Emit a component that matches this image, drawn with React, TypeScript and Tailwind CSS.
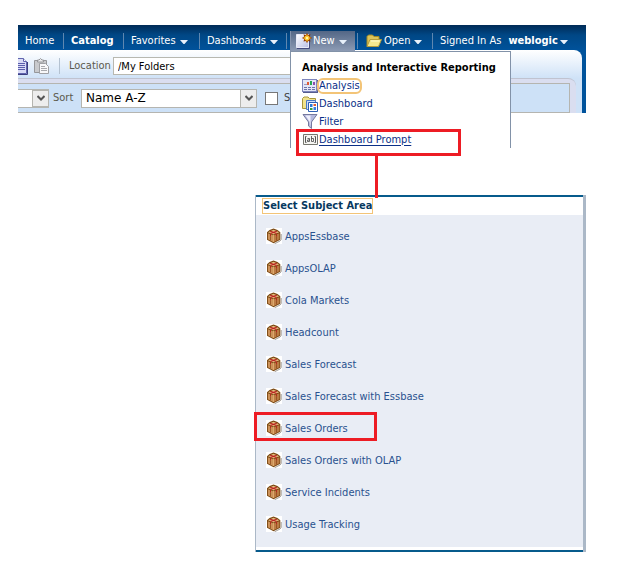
import type { ReactNode } from "react";

const subjectAreas = [
  "AppsEssbase",
  "AppsOLAP",
  "Cola Markets",
  "Headcount",
  "Sales Forecast",
  "Sales Forecast with Essbase",
  "Sales Orders",
  "Sales Orders with OLAP",
  "Service Incidents",
  "Usage Tracking",
];

function Caret() {
  return (
    <svg width="8" height="9" viewBox="0 0 8 9" className="shrink-0" aria-hidden="true">
      <path d="M0 4h8L4.500 8h-1z" fill="#e8f0fa" />
    </svg>
  );
}

function Separator() {
  return <span className="h-4 w-px shrink-0 bg-[#5e87b0]" />;
}

function NewIcon() {
  return (
    <svg width="16" height="16" viewBox="0 0 16 16" className="shrink-0" aria-hidden="true">
      <defs>
        <linearGradient id="page" x1="0" y1="0" x2="1" y2="1">
          <stop offset="0" stopColor="#fff" />
          <stop offset="1" stopColor="#b9bfe6" />
        </linearGradient>
      </defs>
      <path d="M.5 1.500h12v13H.5z" fill="url(#page)" stroke="#e8eaf8" />
      <path d="M13.500 8v7.500H1" fill="none" stroke="#464c80" />
      <path d="M11 0l1.300 2 2.200-.7-.7 2.300L16 5l-2.200 1.300.7 2.200-2.200-.6L11 10 9.700 7.900l-2.200.6.7-2.200L6 5l2.200-1.400-.7-2.300 2.200.7z" fill="#8c3300" />
      <path d="M11 1.500v7M7.500 5h7M9 3l4 4M13 3L9 7" stroke="#ffc629" strokeWidth="1.400" />
      <circle cx="11" cy="5" r="1.300" fill="#fff6a0" />
    </svg>
  );
}

function FolderIcon() {
  return (
    <svg width="16" height="14" viewBox="0 0 16 14" className="shrink-0" aria-hidden="true">
      <path d="M1 12.500V2.500L2.500 1h4L8 2.500h5v3" fill="#dcc45a" stroke="#a58a22" />
      <path d="M1 12.500L4 5.500h11.500l-3 7z" fill="#f5e88f" stroke="#b59c3a" />
      <path d="M5 7h8.500" stroke="#fffbd0" />
    </svg>
  );
}

function AnalysisIcon() {
  return (
    <svg width="16" height="14" viewBox="0 0 16 14" shapeRendering="crispEdges" aria-hidden="true">
      <path d="M0 0h15v13H0z" fill="#7d85bd" />
      <path d="M15 1h1v13H1v-1h14z" fill="#555c8e" />
      <path d="M1 1h13v11H1z" fill="#e3e6f7" />
      <path d="M2 5h3v1H2z" fill="#9a9cc0" />
      <path d="M5 3h2v3H5z" fill="#e05a35" />
      <path d="M8 2h2v4H8z" fill="#22a650" />
      <path d="M11 3h2v3h-2z" fill="#8a4fb0" />
      <path d="M2 8h3v1H2zM6 8h3v1H6zM10 8h3v1h-3zM2 10h3v1H2zM6 10h3v1H6zM10 10h3v1h-3z" fill="#6b72a8" />
    </svg>
  );
}

function DashboardIcon() {
  return (
    <svg width="16" height="16" viewBox="0 0 16 16" aria-hidden="true">
      <path d="M.5 12.500v-10L2 1h4l1.500 1.500h6v10z" fill="#f1e38d" stroke="#a99639" />
      <path d="M4.500 4.500h9v9h-9z" fill="#cddcf8" stroke="#4b7ac5" />
      <path d="M6.500 6.500h9v9h-9z" fill="#fff" stroke="#2d5fb4" />
      <path d="M8 8h2.500v3H8z" fill="#2878d8" />
      <path d="M11.500 8H14v2h-2.500z" fill="#e2582e" />
      <path d="M8 12h2.500v2H8z" fill="#38a13c" />
      <path d="M11.500 11H14v3h-2.500z" fill="#387ce0" />
    </svg>
  );
}

function FilterIcon() {
  return (
    <svg width="16" height="15" viewBox="0 0 16 15" aria-hidden="true">
      <path d="M1 .5h14L9.500 8v6.500L6.500 12V8z" fill="#b4b9de" stroke="#75799f" />
      <path d="M3.500 1.500h5L8.500 12l-1-4.500z" fill="#f0f0fc" />
    </svg>
  );
}

function PromptIcon() {
  return (
    <svg width="15" height="11" viewBox="0 0 15 11" aria-hidden="true">
      <path d="M.5.5h14v10H.5z" fill="#f6f6f2" stroke="#77776f" />
      <path d="M3.500 2.500h-1v6h1M11.500 2.500h1v6h-1" fill="none" stroke="#555" />
      <path d="M4.500 4.500h2v3h-2V6h2M8.500 2v5.500h2v-3h-2" fill="none" stroke="#444" strokeWidth=".8" />
    </svg>
  );
}

function PackageIcon() {
  return (
    <svg width="16" height="16" viewBox="0 0 16 16" className="shrink-0 bg-white" aria-hidden="true">
      <path d="M8.500 15.800l5.500-2.800 1.200-1.500V6" fill="none" stroke="#a39e98" />
      <path d="M7.500.6L11.500 2l2.800 2.300v7.400L7.500 15.200 1 11.700V4.300L3.500 2z" fill="#7a4812" />
      <path d="M1.900 5.200L7 7.200v6.700L1.900 11.200z" fill="#cc9259" />
      <path d="M8 7.200l5.400-2v6L8 13.900z" fill="#bb7a43" />
      <path d="M2 4.200L7.500 1.700 13.300 4.200 7.500 6.400z" fill="#e5bd80" />
      <path d="M4.200 3.200l6.300 2.200M10.800 3.200L4.500 5.400" fill="none" stroke="#b91f20" strokeWidth="1.200" />
      <path d="M4.500 6v2.500M10.500 6v2.500" stroke="#b42a20" />
      <path d="M4.500 8.500V12.600M10.500 8.500v4.100" stroke="#8e4a1c" strokeWidth=".8" />
      <path d="M7.500 7v7" stroke="#ddaa6c" />
    </svg>
  );
}

function CopyIcon() {
  return (
    <svg width="16" height="18" viewBox="0 0 16 18" className="shrink-0" aria-hidden="true">
      <path d="M4.500 1.500h7l3 3v12h-10z" fill="#d9dbf6" stroke="#6165ae" />
      <path d="M15.500 5v12.500H5" fill="none" stroke="#3d3f80" />
      <path d="M11.500 1.500v3h3" fill="#fff" stroke="#6165ae" />
      <path d="M6 6.500h7M6 8.500h7M6 10.500h7M6 12.500h7" stroke="#5b5fac" />
    </svg>
  );
}

function PasteIcon() {
  return (
    <svg width="16" height="16" viewBox="0 0 16 16" className="shrink-0" aria-hidden="true">
      <path d="M1.500 2.500h12v12h-12z" fill="#c9cacd" stroke="#96979a" />
      <path d="M4.500 4V2H6l1.500-1.500L9 2h1.500v2z" fill="#ececee" stroke="#96979a" />
      <path d="M6.500 5.500h6l3 3v7h-9z" fill="#f8f8fa" stroke="#9fa0a4" />
      <path d="M8 8.500h4M8 10.500h6M8 12.500h6" stroke="#a9aaae" />
    </svg>
  );
}

function SelectArrow() {
  return (
    <span className="pointer-events-none absolute inset-y-0 right-0 flex w-[17px] items-center justify-center border border-[#b5b5b0] bg-[#ededed]">
      <svg width="8" height="7" viewBox="0 0 8 7" aria-hidden="true">
        <path d="M.5 1L4 4.500 7.500 1" fill="none" stroke="#555" strokeWidth="2" />
      </svg>
    </span>
  );
}

function MenuLink({ icon, label, look }: { icon: ReactNode; label: string; look: string }) {
  return (
    <li className="flex h-[18px] items-center gap-px">
      <span className="flex w-4 shrink-0 justify-center">{icon}</span>
      <a href="#" className={`whitespace-nowrap leading-3 text-[#0b2f87] ${look}`}>
        {label}
      </a>
    </li>
  );
}

export default function App() {
  return (
    <main className="bg-white pt-[25px] pr-[57px] pb-[15px] font-['DejaVu_Sans_Condensed','DejaVu_Sans',sans-serif] text-[11px] leading-4">
      <section className="ml-[18px] bg-[#00539c]">
        <nav className="flex h-[25px] items-end bg-linear-to-b from-[#002b57] via-[#004785] via-40% to-[#00529b] text-white">
          <div className="flex h-5 w-full items-center pt-px whitespace-nowrap">
            <a href="#" className="w-[45px] pl-[7px]">Home</a>
            <Separator />
            <a href="#" className="w-[59px] pl-[7px] font-bold">Catalog</a>
            <Separator />
            <button className="flex w-[75px] items-center gap-1 pl-[7px]">Favorites <Caret /></button>
            <Separator />
            <button className="flex w-[86px] items-center gap-1 pl-[7px]">Dashboards <Caret /></button>
            <Separator />
            <div className="relative ml-[3px] h-5 w-[65px]">
              <button className="flex h-5 w-full items-center gap-1 border-l border-[#8493ad] bg-linear-to-b from-[#536786] to-[#8d9bb4] pl-[5px]">
                <NewIcon />
                <span className="-ml-[3px]">New</span>
                <Caret />
              </button>
              <div className="absolute top-full left-0 z-10 h-[97px] w-[221px] border-x border-t border-[#8292a8] bg-white px-[11px] pt-[7px] text-black">
                <h2 className="h-[18px] leading-[18px] font-bold">Analysis and Interactive Reporting</h2>
                <ul>
                  <MenuLink icon={<AnalysisIcon />} label="Analysis" look="rounded-sm outline-2 outline-[#f3c477]" />
                  <MenuLink icon={<DashboardIcon />} label="Dashboard" look="" />
                  <MenuLink icon={<FilterIcon />} label="Filter" look="" />
                  <MenuLink icon={<PromptIcon />} label="Dashboard Prompt" look="underline underline-offset-2" />
                </ul>
                <span className="absolute top-[77px] left-[5px] h-[27px] w-[165px] border-3 border-[#ed1c24]" />
                <span className="absolute top-[103px] left-[84px] h-[43px] w-[3px] bg-[#ed1c24]" />
              </div>
            </div>
            <span className="w-0.5" />
            <Separator />
            <button className="flex w-[74px] items-center gap-1 pl-2"><FolderIcon /><span className="-ml-0.5">Open</span><Caret /></button>
            <Separator />
            <span className="pl-[7px]">Signed In As</span>
            <button className="flex items-center gap-0.5 pl-[7px] font-bold">weblogic <Caret /></button>
          </div>
        </nav>

        <div className="mr-1 h-[63px] rounded-tr-lg bg-linear-to-b from-white via-[#cfe2f7] via-45% to-[#cfe2f7]">
          <div className="flex h-7 items-center pt-1">
            <button aria-label="Copy" className="flex w-2.5 justify-end overflow-hidden"><CopyIcon /></button>
            <button aria-label="Paste" className="ml-[5px]"><PasteIcon /></button>
            <span className="ml-2.5 h-4 w-px bg-[#b4c2d1]" />
            <label htmlFor="location" className="w-[53px] pl-[9px] text-[#5b594d]">Location</label>
            <input id="location" defaultValue="/My Folders" className="h-[18px] w-[380px] min-w-0 border border-[#b8b8b0] bg-white px-1 text-black" />
          </div>
          <div className="mr-1.5 h-[35px] rounded-tr-lg border-t border-[#c0c3d0] bg-[#dadef0] pt-1">
            <div className="mr-1.5 flex h-[30px] items-center border-y border-r border-[#b5b5b0] bg-[#cde1f7]">
              <span className="relative h-[19px] w-[31px] border-y border-[#b5b5b0] bg-white">
                <select aria-label="View" className="h-full w-full appearance-none" />
                <SelectArrow />
              </span>
              <label htmlFor="sort" className="w-8 pl-1 text-[#5b594d]">Sort</label>
              <span className="relative h-[19px] w-[176px]">
                <select id="sort" className="h-full w-full appearance-none border border-[#b5b5b0] bg-white pl-1 font-['DejaVu_Sans',sans-serif] text-xs leading-4 text-black">
                  <option>Name A-Z</option>
                </select>
                <SelectArrow />
              </span>
              <input id="show" type="checkbox" className="ml-2 size-[13px] appearance-none border border-[#777] bg-white" />
              <label htmlFor="show" className="ml-1.5 text-[#404040]">S</label>
            </div>
          </div>
        </div>
      </section>

      <section className="mt-[82px] ml-[255px] border-r-3 border-l border-[#abb8c7]">
        <div className="border-y-2 border-y-[#075b8c] bg-white pb-[3px]">
          <h2 className="flex h-[18px] items-center pl-[7px] text-[#07395f]">
            <span className="leading-[14px] font-bold outline outline-[#f3c477]">Select Subject Area</span>
          </h2>
          <ul className="bg-[#e9edf5] pt-[5px] pb-[7px]">
            {subjectAreas.map((name) => (
              <li key={name} className="relative flex h-8 items-center pl-2.5">
                <a href="#" className="flex items-center gap-[3px] text-[#29528f]">
                  <PackageIcon />
                  <span className="pt-0.5">{name}</span>
                </a>
                {name === "Sales Orders" && (
                  <span className="absolute top-0 -left-[2px] h-[29px] w-[123px] border-3 border-[#ed1c24]" />
                )}
              </li>
            ))}
          </ul>
        </div>
      </section>
    </main>
  );
}
